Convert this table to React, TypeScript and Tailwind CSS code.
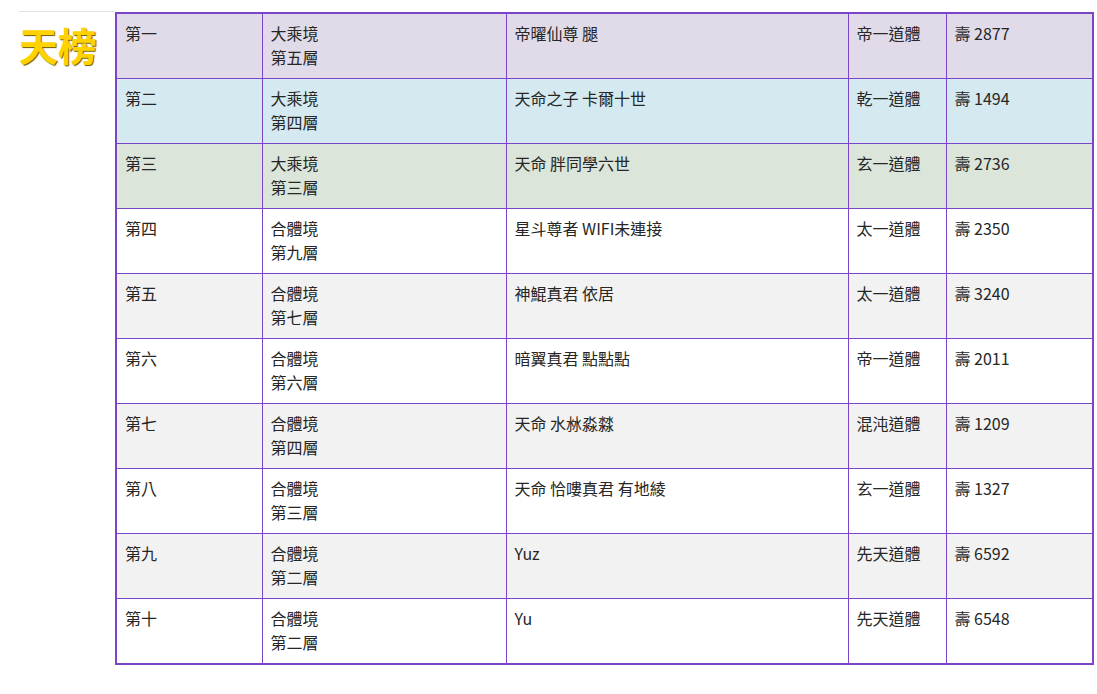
import React from 'react';

type Row = { rank: string; realm: string; layer: string; name: string; body: string; life: string };

const rows: Row[] = [
  { rank: '第一', realm: '大乘境', layer: '第五層', name: '帝曜仙尊 腿', body: '帝一道體', life: '壽 2877' },
  { rank: '第二', realm: '大乘境', layer: '第四層', name: '天命之子 卡爾十世', body: '乾一道體', life: '壽 1494' },
  { rank: '第三', realm: '大乘境', layer: '第三層', name: '天命 胖同學六世', body: '玄一道體', life: '壽 2736' },
  { rank: '第四', realm: '合體境', layer: '第九層', name: '星斗尊者 WIFI未連接', body: '太一道體', life: '壽 2350' },
  { rank: '第五', realm: '合體境', layer: '第七層', name: '神鯤真君 依居', body: '太一道體', life: '壽 3240' },
  { rank: '第六', realm: '合體境', layer: '第六層', name: '暗翼真君 點點點', body: '帝一道體', life: '壽 2011' },
  { rank: '第七', realm: '合體境', layer: '第四層', name: '天命 水沝淼㵘', body: '混沌道體', life: '壽 1209' },
  { rank: '第八', realm: '合體境', layer: '第三層', name: '天命 恰嘍真君 有地綾', body: '玄一道體', life: '壽 1327' },
  { rank: '第九', realm: '合體境', layer: '第二層', name: 'Yuz', body: '先天道體', life: '壽 6592' },
  { rank: '第十', realm: '合體境', layer: '第二層', name: 'Yu', body: '先天道體', life: '壽 6548' },
];

// first three rows have their own tint, the rest alternate white / grey
const rowBg = (i: number) => {
  if (i === 0) return 'bg-[#e1dbe9]';
  if (i === 1) return 'bg-[#d4e9f0]';
  if (i === 2) return 'bg-[#dbe5da]';
  return i % 2 === 0 ? 'bg-[#f2f2f2]' : 'bg-white';
};

const cell = 'border border-[#7b45c9] px-[8px] pt-[7px] pb-[9px] align-top h-[65px]';

export default function App() {
  return (
    <div
      className="flex items-start bg-white text-[#262626] min-h-[694px]"
      style={{ fontFamily: '"Noto Sans CJK TC", "Noto Sans", sans-serif' }}
    >
      <div className="ml-[19px] mt-[11px] w-[96px] border-t border-[#e2e2e2] pt-[4px]">
        <h1 className="text-[39px] leading-[56px] font-bold text-[#ffd200] [text-shadow:1px_1px_1px_#6b5a00]">
          天榜
        </h1>
      </div>
      <table className="mt-[12px] table-fixed border-collapse border-2 border-[#7b45c9] w-[977px] text-[16px] leading-[24px]">
        <colgroup>
          <col className="w-[146px]" />
          <col className="w-[244px]" />
          <col className="w-[342px]" />
          <col className="w-[98px]" />
          <col className="w-[147px]" />
        </colgroup>
        <tbody>
          {rows.map((r, i) => (
            <tr key={r.rank} className={rowBg(i)}>
              <td className={cell}>{r.rank}</td>
              <td className={cell}>
                {r.realm}
                <br />
                {r.layer}
              </td>
              <td className={cell}>{r.name}</td>
              <td className={cell}>{r.body}</td>
              <td className={cell}>{r.life}</td>
            </tr>
          ))}
        </tbody>
      </table>
    </div>
  );
}
